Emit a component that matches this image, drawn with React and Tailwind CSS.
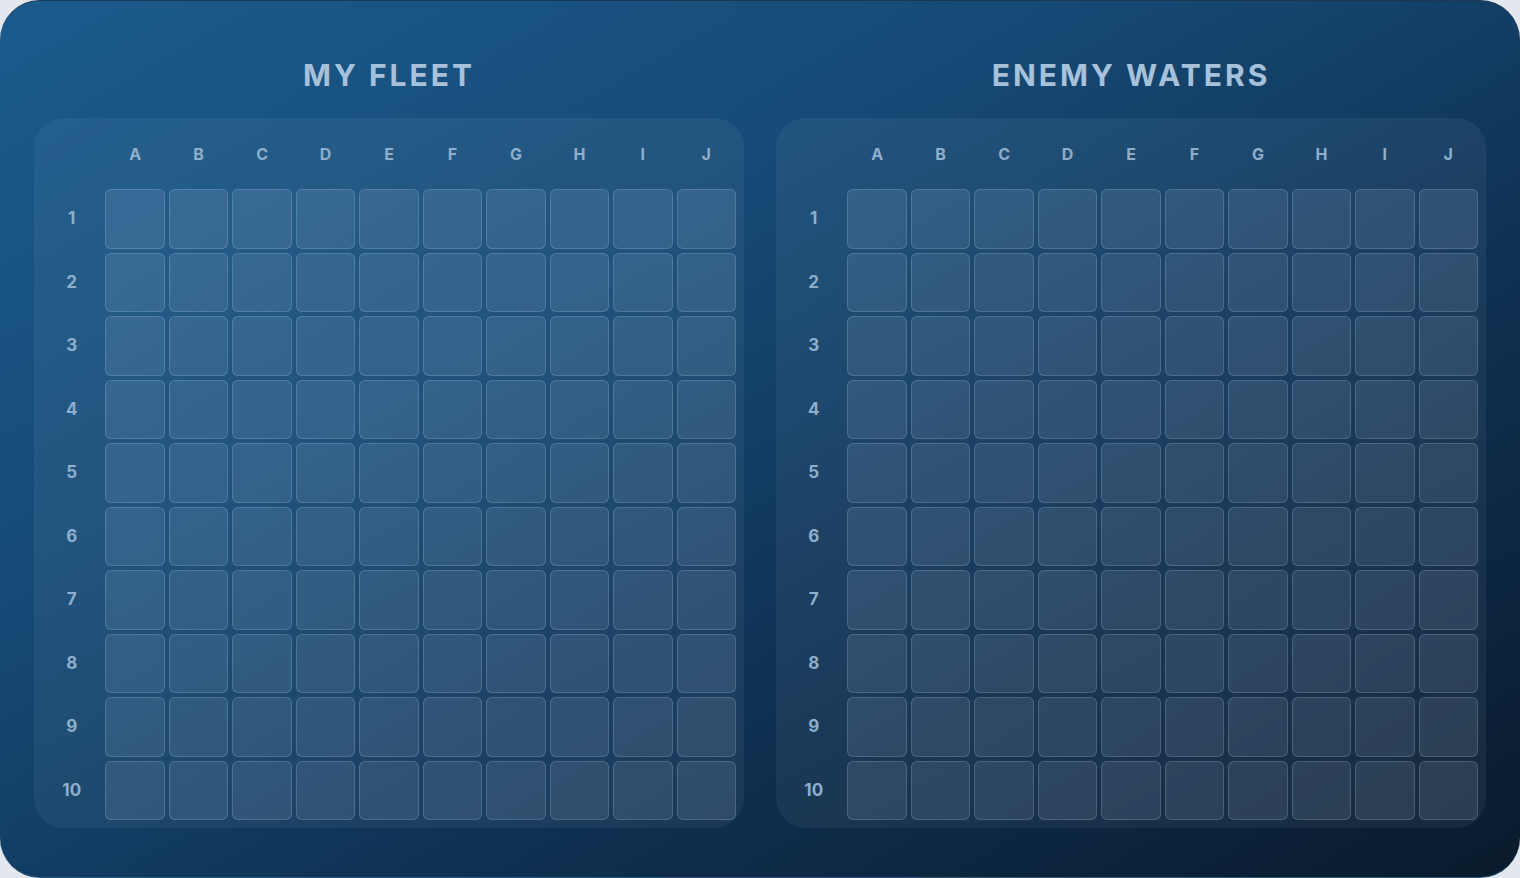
import React from 'react';

const COLS = ['A', 'B', 'C', 'D', 'E', 'F', 'G', 'H', 'I', 'J'];
const ROWS = [1, 2, 3, 4, 5, 6, 7, 8, 9, 10];

// One 10x10 board with column letters on top and row numbers on the left
const Board = ({ title }) => (
    <div className="flex flex-col items-center w-[710px]">
        <h2 className="h-[36px] leading-[36px] text-[30px] font-bold tracking-widest text-[#a7c1da]">
            {title}
        </h2>
        <div className="mt-[25px] w-[710px] h-[710px] p-2 rounded-[30px] bg-[#d6e8ff]/[0.06]">
            <div className="grid grid-cols-11 grid-rows-11 gap-1 w-full h-full">
                <div />
                {COLS.map(c => (
                    <div key={c} className="flex items-center justify-center pb-1 text-[16px] font-bold text-[#8eaecb]">
                        {c}
                    </div>
                ))}
                {ROWS.map(r => (
                    <React.Fragment key={r}>
                        <div className="flex items-center justify-center text-[17px] font-bold text-[#8eaecb]">
                            {r}
                        </div>
                        {COLS.map(c => (
                            <button
                                key={`${c}${r}`}
                                className="rounded-md border border-[#d6e8ff]/[0.18] bg-[#d6e8ff]/[0.11]"
                            />
                        ))}
                    </React.Fragment>
                ))}
            </div>
        </div>
    </div>
);

export default function App() {
    return (
        <div className="w-[1520px] h-[878px] bg-[#e3e8ee] font-['Inter','Liberation_Sans',sans-serif]">
            <div className="w-full h-full rounded-[40px] border-t border-t-[#1c3550] border-b border-b-[#2b5a80] bg-[linear-gradient(150deg,#1b5b8c_0%,#164a76_35%,#0f3152_65%,#0a1a2c_100%)] flex justify-center gap-8 pt-[56px]">
                <Board title="MY FLEET" />
                <Board title="ENEMY WATERS" />
            </div>
        </div>
    );
}
